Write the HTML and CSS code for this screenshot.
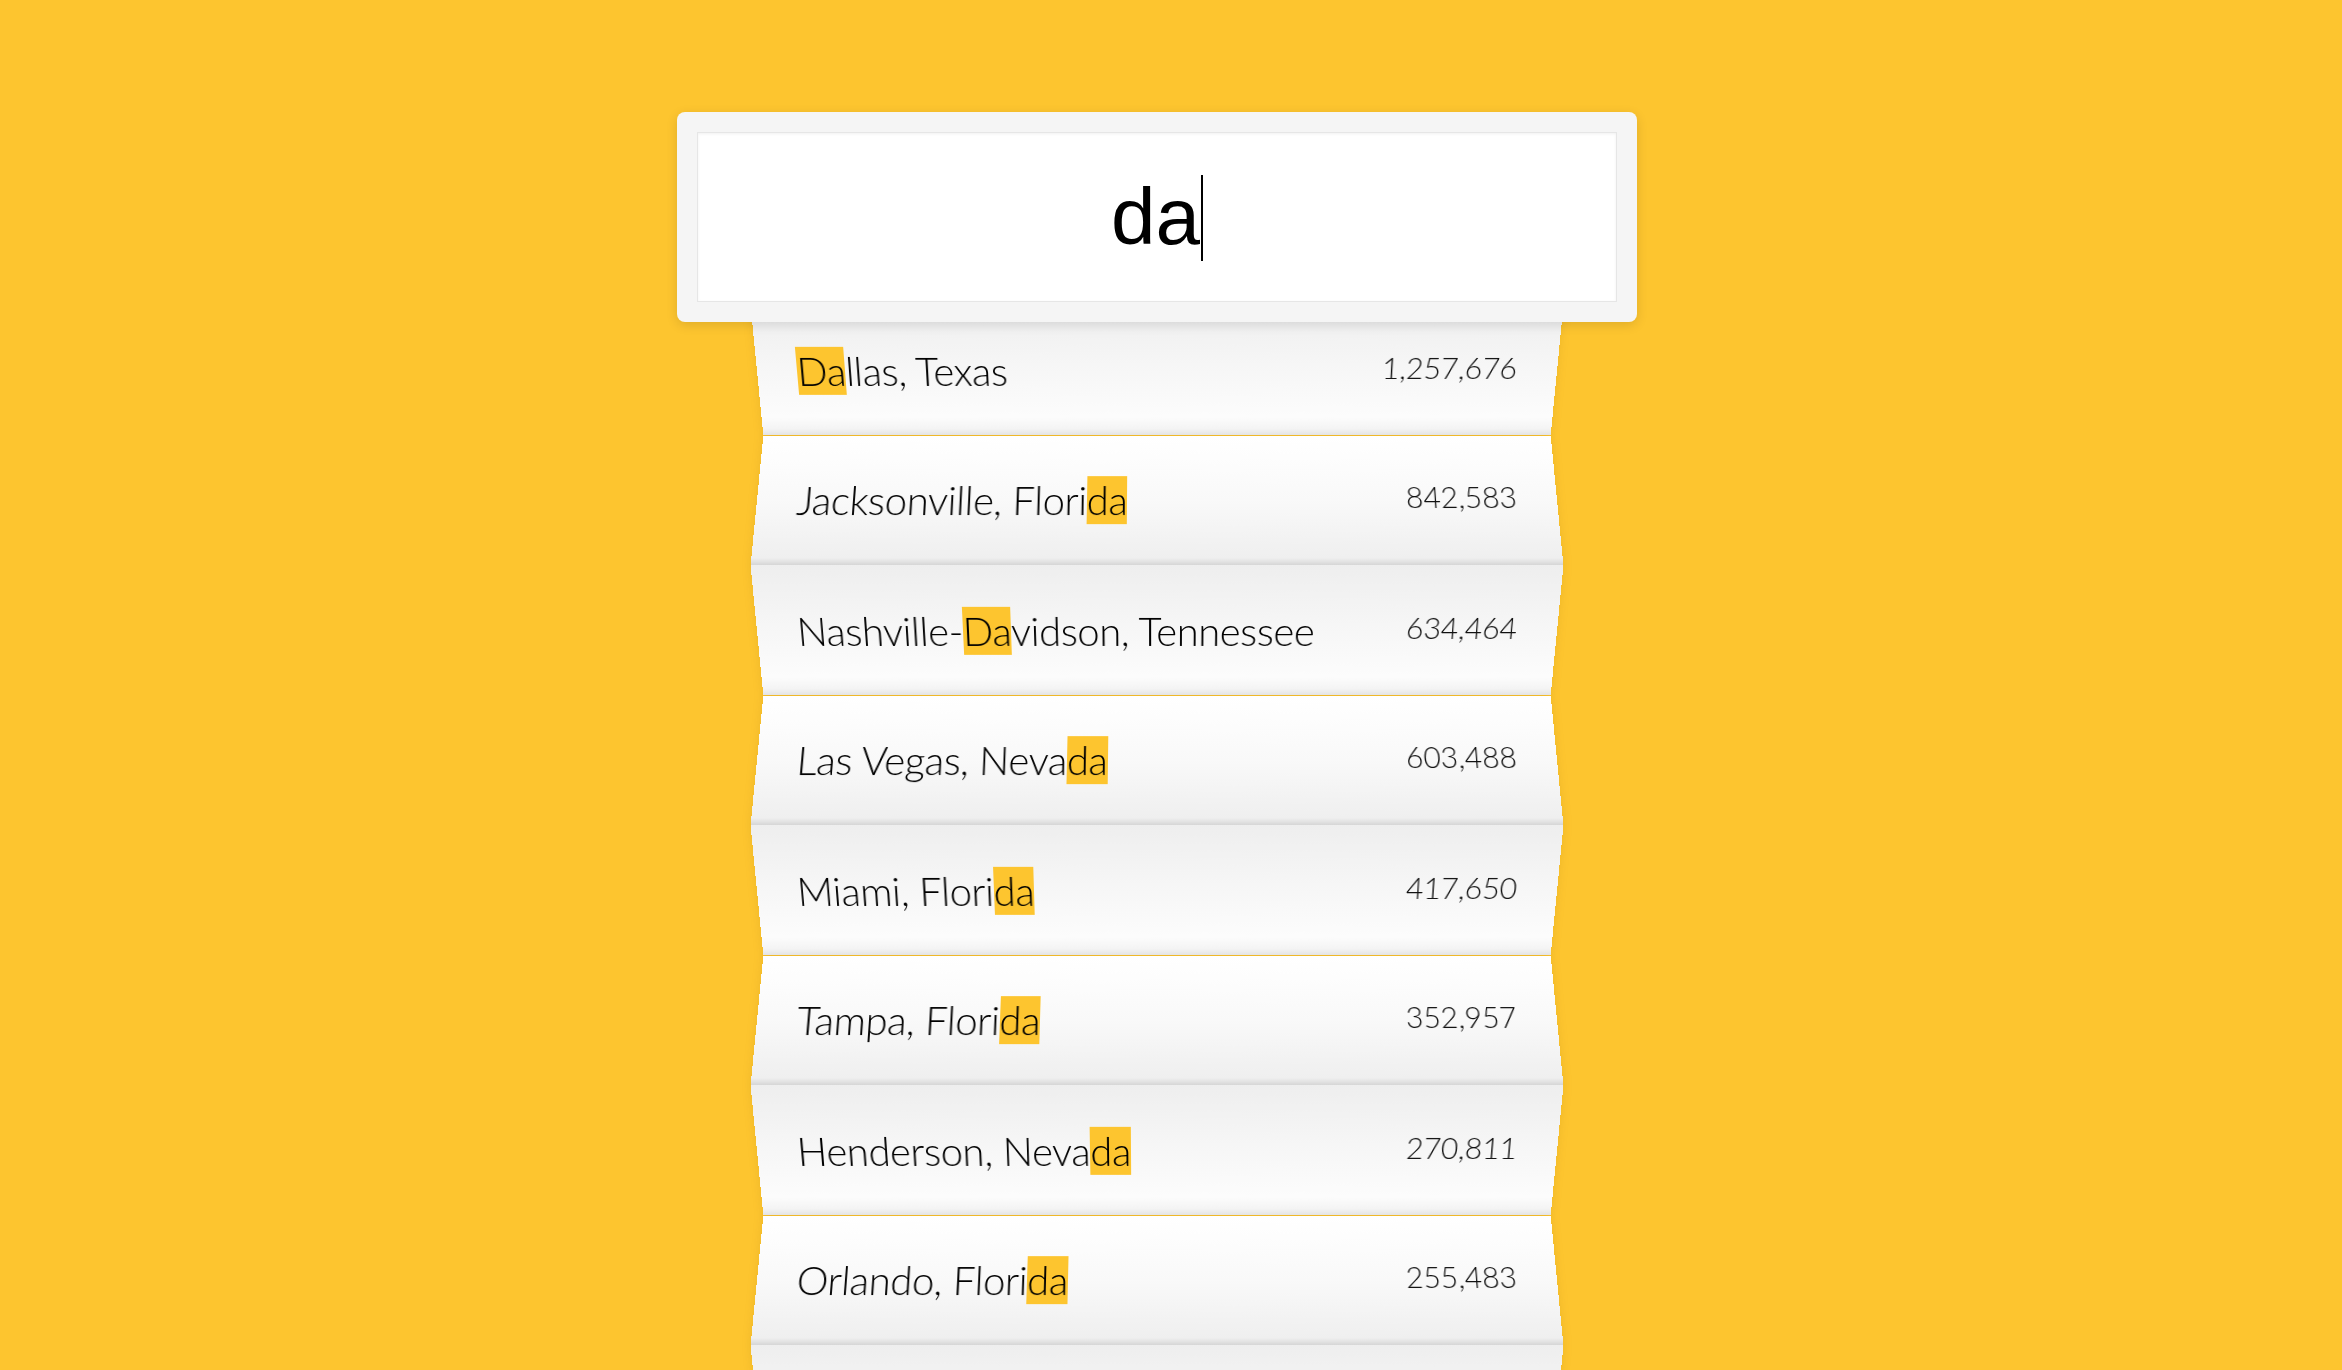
FILE: index.html
```html
<!DOCTYPE html>
<html lang="en">
<head>
<meta charset="utf-8">
<title>City search</title>
<link rel="stylesheet" href="styles.css">
</head>
<body>
<div class="page">
  <div class="search-wrap">
    <div class="search">
      <div class="input"><span class="query">da</span><span class="caret"></span></div>
    </div>
    <ul class="results">
      <li class="row"><span class="name"><mark>Da</mark>llas, Texas</span><span class="pop">1,257,676</span></li>
      <li class="row"><span class="name">Jacksonville, Flori<mark>da</mark></span><span class="pop">842,583</span></li>
      <li class="row"><span class="name">Nashville-<mark>Da</mark>vidson, Tennessee</span><span class="pop">634,464</span></li>
      <li class="row"><span class="name">Las Vegas, Neva<mark>da</mark></span><span class="pop">603,488</span></li>
      <li class="row"><span class="name">Miami, Flori<mark>da</mark></span><span class="pop">417,650</span></li>
      <li class="row"><span class="name">Tampa, Flori<mark>da</mark></span><span class="pop">352,957</span></li>
      <li class="row"><span class="name">Henderson, Neva<mark>da</mark></span><span class="pop">270,811</span></li>
      <li class="row"><span class="name">Orlando, Flori<mark>da</mark></span><span class="pop">255,483</span></li>
      <li class="row row-more"></li>
    </ul>
  </div>
</div>
</body>
</html>
```
FILE: styles.css
```css
html, body {
  margin: 0;
  height: 100%;
  overflow: hidden;
  background: #fdc52f;
}

.page {
  display: flex;
  justify-content: center;
  padding: 112px 28px 0 0;
}

.search-wrap {
  width: 960px;
  display: flex;
  flex-direction: column;
  align-items: center;
}

.search {
  position: relative;
  z-index: 2;
  width: 100%;
  box-sizing: border-box;
  padding: 20px;
  background: #f5f5f5;
  border-radius: 8px;
  box-shadow: 0 3px 12px rgba(0, 0, 0, 0.12);
}

.input {
  height: 170px;
  box-sizing: border-box;
  background: #fff;
  border: 1px solid #e6e6e6;
  box-shadow: inset 0 1px 3px rgba(0, 0, 0, 0.06);
  display: flex;
  align-items: center;
  justify-content: center;
}

.query {
  font-family: "Liberation Sans", Arial, sans-serif;
  font-size: 80px;
  color: #000;
}

.caret {
  width: 2px;
  height: 86px;
  margin-left: 1px;
  margin-top: 2px;
  background: #000;
}

.results {
  list-style: none;
  margin: -16px 0 0;
  padding: 0;
  width: 800px;
  filter: drop-shadow(0 0 5px rgba(120, 80, 0, 0.12));
}

.row {
  height: 130px;
  box-sizing: border-box;
  padding: 0 40px;
  display: flex;
  align-items: center;
  justify-content: space-between;
  font-family: Lato, "Liberation Sans", sans-serif;
  font-weight: 300;
  color: #000;
  transform-origin: 50% 50%;
}

.row:nth-child(odd) {
  transform: perspective(1480px) rotateX(-20deg) scaleY(1.0642);
  background: linear-gradient(180deg, #eeeeee 0%, #f6f6f6 45%, #fcfcfc 86%, #f4f4f4 95%, #e4e4e4 100%);
}

.row:nth-child(odd):not(:first-child) {
  margin-top: 1px;
}

.row:nth-child(even) {
  margin-top: -1px;
  transform: perspective(1480px) rotateX(20deg) scaleY(1.0642);
  background: linear-gradient(180deg, #ffffff 0%, #f9f9f9 50%, #efefef 94%, #d2d2d2 100%);
}

.name {
  font-size: 40px;
  letter-spacing: -0.4px;
  white-space: nowrap;
}

.name mark {
  background: #fdc52f;
  color: inherit;
}

.pop {
  font-size: 30px;
  color: #111;
  margin-bottom: 8px;
}
```
